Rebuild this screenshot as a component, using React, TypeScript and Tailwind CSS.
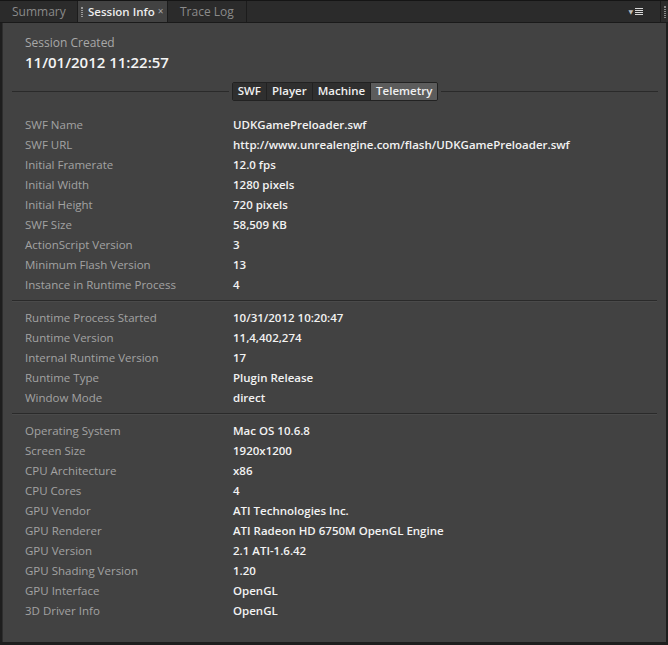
import React, { useState } from 'react';

// Session Info panel — SWF / Player / Machine / Telemetry details

type Row = [string, string];

const swfRows: Row[] = [
  ['SWF Name', 'UDKGamePreloader.swf'],
  ['SWF URL', 'http://www.unrealengine.com/flash/UDKGamePreloader.swf'],
  ['Initial Framerate', '12.0 fps'],
  ['Initial Width', '1280 pixels'],
  ['Initial Height', '720 pixels'],
  ['SWF Size', '58,509 KB'],
  ['ActionScript Version', '3'],
  ['Minimum Flash Version', '13'],
  ['Instance in Runtime Process', '4'],
];

const playerRows: Row[] = [
  ['Runtime Process Started', '10/31/2012 10:20:47'],
  ['Runtime Version', '11,4,402,274'],
  ['Internal Runtime Version', '17'],
  ['Runtime Type', 'Plugin Release'],
  ['Window Mode', 'direct'],
];

const machineRows: Row[] = [
  ['Operating System', 'Mac OS 10.6.8'],
  ['Screen Size', '1920x1200'],
  ['CPU Architecture', 'x86'],
  ['CPU Cores', '4'],
  ['GPU Vendor', 'ATI Technologies Inc.'],
  ['GPU Renderer', 'ATI Radeon HD 6750M OpenGL Engine'],
  ['GPU Version', '2.1 ATI-1.6.42'],
  ['GPU Shading Version', '1.20'],
  ['GPU Interface', 'OpenGL'],
  ['3D Driver Info', 'OpenGL'],
];

const segments = ['SWF', 'Player', 'Machine', 'Telemetry'];

function Section({ rows }: { rows: Row[] }) {
  return (
    <div className="flex flex-col">
      {rows.map(([k, v]) => (
        <div key={k} className="flex h-5 items-center whitespace-nowrap">
          <div className="w-[230px] shrink-0 pl-[22px] text-[#a3a3a3]">{k}</div>
          <div className="font-semibold text-[#f2f2f2]">{v}</div>
        </div>
      ))}
    </div>
  );
}

function Divider() {
  return (
    <div className="mx-[9px] mt-[5px] mb-[6px] border-t border-[#2a2a2a] border-b border-b-[#4a4a4a]" />
  );
}

export default function App() {
  const [seg, setSeg] = useState('Telemetry');

  return (
    <div
      className="flex h-[645px] w-[668px] flex-col overflow-hidden bg-[#1e1e1e] text-[11.5px]"
      style={{ fontFamily: '"Open Sans", "DejaVu Sans", sans-serif' }}
    >
      {/* Tab strip */}
      <div className="flex h-[23px] shrink-0 items-stretch whitespace-nowrap border-t border-[#151515] bg-[#2b2b2b] border-b border-b-[#1a1a1a]">
        <div className="flex w-[78px] items-center border-r border-[#1c1c1c] pl-3 text-[12px] text-[#8a8a8a]">Summary</div>
        <div className="flex w-[90px] items-center gap-[5px] border-r border-[#1c1c1c] bg-[#424242] pl-[3px] text-[11.5px] font-semibold text-[#ececec]">
          <span className="h-[10px] w-[2px] shrink-0 border-l border-r border-dotted border-[#9a9a9a]" />
          <span>Session Info</span>
          <span className="-ml-[2px] text-[10px] font-normal text-[#aaaaaa]">×</span>
        </div>
        <div className="flex w-[79px] items-center border-r border-[#1c1c1c] pl-3 text-[12px] text-[#8a8a8a]">Trace Log</div>
        <div className="flex-1" />
        <div className="flex items-center gap-[2px] pr-[17px]">
          <span className="text-[6px] leading-none text-[#bdbdbd]">▼</span>
          <div className="flex flex-col gap-[1px]">
            <span className="h-[1px] w-[8px] bg-[#d8d8d8]" />
            <span className="h-[1px] w-[8px] bg-[#d8d8d8]" />
            <span className="h-[1px] w-[8px] bg-[#d8d8d8]" />
            <span className="h-[1px] w-[8px] bg-[#d8d8d8]" />
          </div>
        </div>
        <div className="flex w-[8px] items-center justify-center border-l border-[#1a1a1a]">
          <span className="h-[12px] w-[2px] border-l border-r border-dotted border-[#8a8a8a]" />
        </div>
      </div>

      {/* Content */}
      <div className="ml-[2px] mr-[2px] mb-[3px] flex flex-1 flex-col border-l border-[#2e2e2e] bg-[#424242]">
        <div className="pl-[22px] pt-[11px]">
          <div className="text-[12px] text-[#a8a8a8]">Session Created</div>
          <div className="-mt-[1px] text-[15px] font-semibold text-[#f4f4f4]">11/01/2012 11:22:57</div>
        </div>

        <div className="mt-[8px] flex items-center pl-[9px] pr-[8px]">
          <div className="h-0 flex-1 border-t border-[#2a2a2a]" />
          <div className="mx-[3px] flex h-[19px] overflow-hidden rounded-[2px] border border-[#222]">
            {segments.map((s, i) => (
              <button
                key={s}
                onClick={() => setSeg(s)}
                className={
                  'flex items-center px-[5px] text-[11.5px] font-semibold text-[#f0f0f0] ' +
                  (i > 0 ? 'border-l border-[#222] ' : '') +
                  (seg === s ? 'bg-[#5c5c5c]' : 'bg-[#2f2f2f]')
                }
              >
                {s}
              </button>
            ))}
          </div>
          <div className="h-0 flex-1 border-t border-[#2a2a2a]" />
        </div>

        <div className="mt-[14px]">
          <Section rows={swfRows} />
        </div>
        <Divider />
        <Section rows={playerRows} />
        <Divider />
        <Section rows={machineRows} />
      </div>
    </div>
  );
}
